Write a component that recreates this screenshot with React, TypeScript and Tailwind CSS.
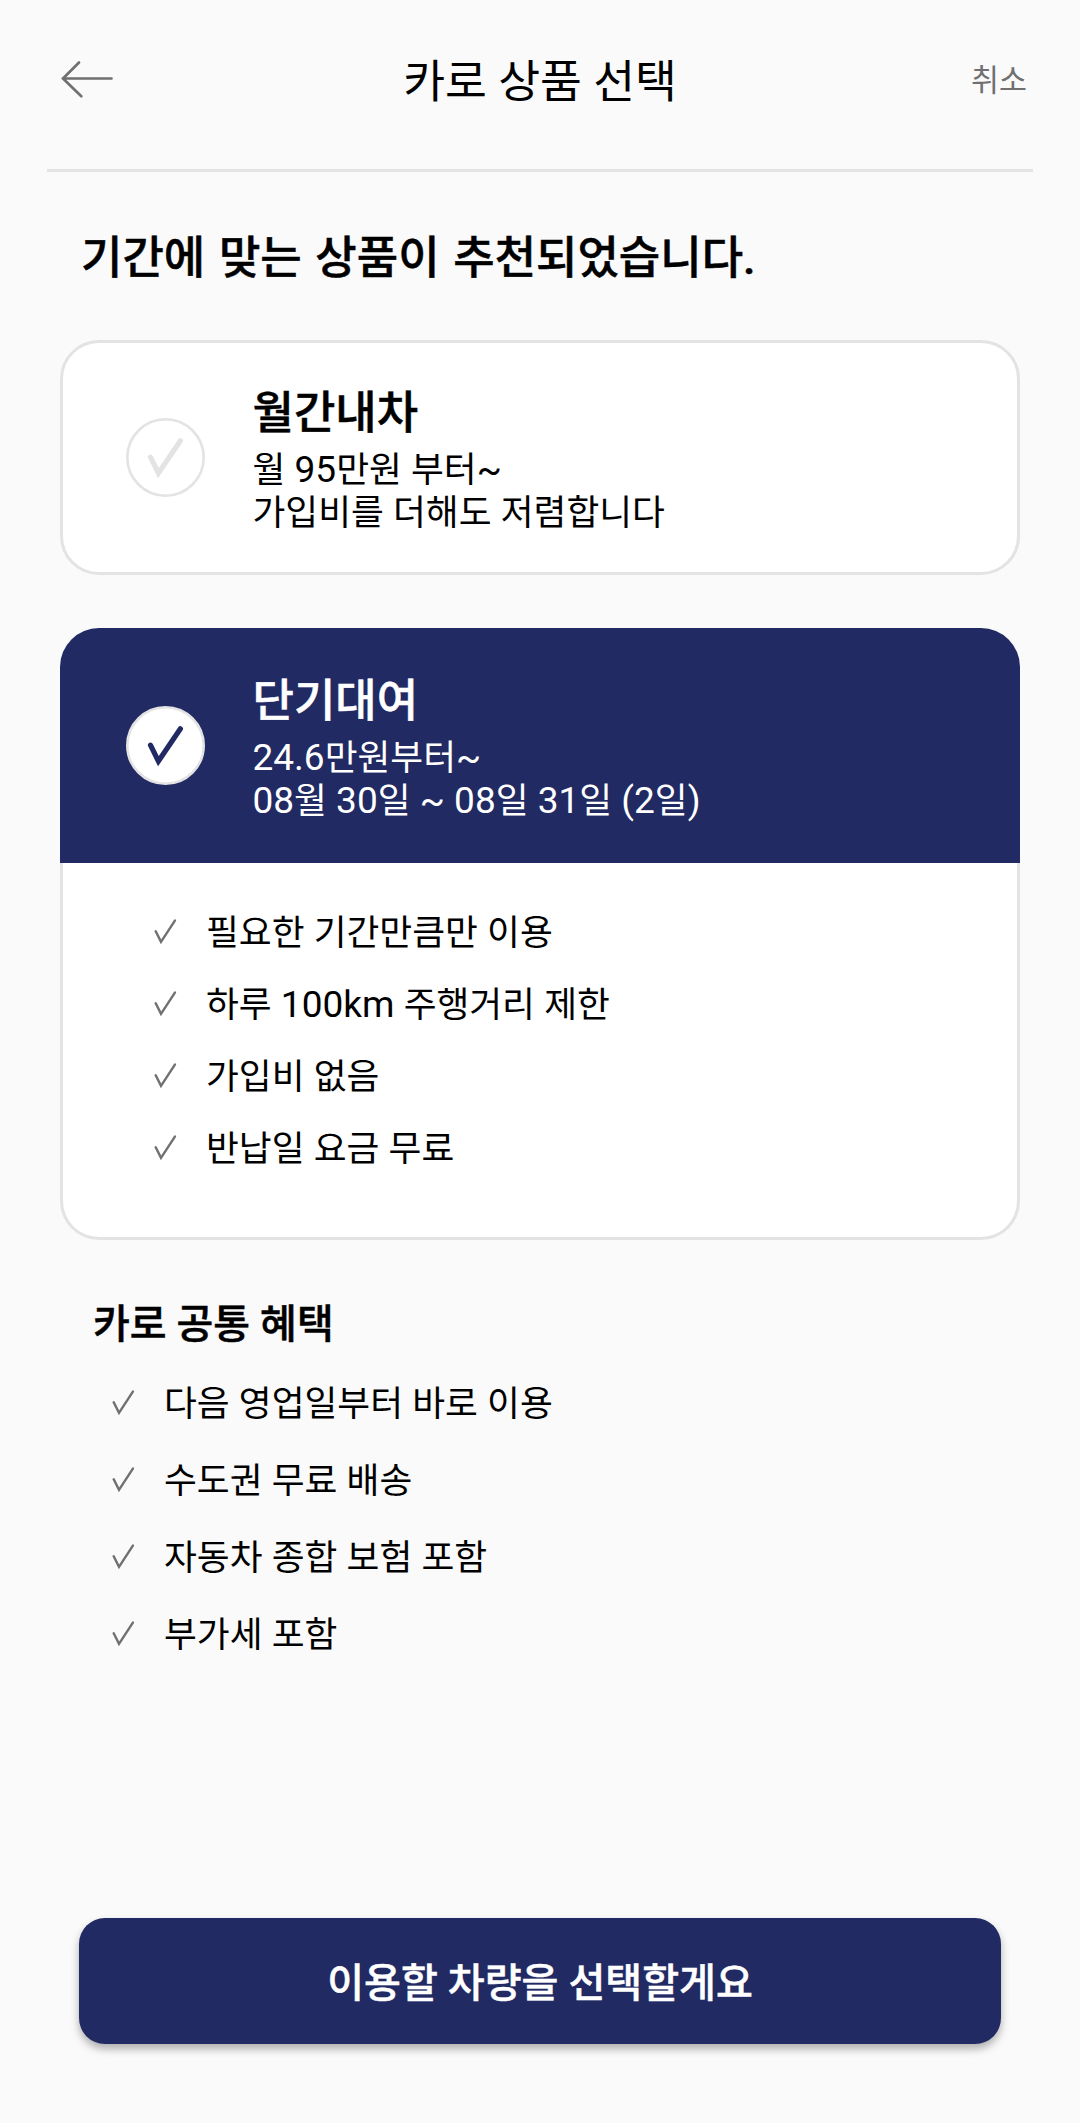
import { useState } from "react";
import clsx from "clsx";

interface CheckProps {
  className?: string;
}

interface Product {
  id: string;
  name: string;
  price: string;
  description: string;
  features: string[];
}

const products: Product[] = [
  {
    id: "monthly",
    name: "월간내차",
    price: "월 95만원 부터~",
    description: "가입비를 더해도 저렴합니다",
    features: [],
  },
  {
    id: "short",
    name: "단기대여",
    price: "24.6만원부터~",
    description: "08월 30일 ~ 08일 31일 (2일)",
    features: ["필요한 기간만큼만 이용", "하루 100km 주행거리 제한", "가입비 없음", "반납일 요금 무료"],
  },
];

const benefits = ["다음 영업일부터 바로 이용", "수도권 무료 배송", "자동차 종합 보험 포함", "부가세 포함"];

const BackArrow = () => (
  <svg width="54" height="40" viewBox="0 0 54 40" fill="none" stroke="#707070" strokeWidth="2.7" strokeLinecap="round">
    <path d="M51.5 19.5H4M19 3.5L3 19.5L21.3 37.3" />
  </svg>
);

const SmallCheck = () => (
  <svg width="24" height="28" viewBox="0 0 24 28" fill="none" stroke="#707070" strokeWidth="2.4" strokeLinecap="round">
    <path d="M1.7 12.3L7 22.8L20.9 1.6" />
  </svg>
);

const CircleCheck = ({ className }: CheckProps) => (
  <svg width="79" height="79" viewBox="0 0 79 79" fill="none" className={className}>
    <circle cx="39.5" cy="39.5" r="38.2" fill="#fff" stroke="#e3e3e3" strokeWidth="2.6" />
    <path d="M24.5 39.2L32.4 55.2L54.4 22.8" stroke="currentColor" strokeWidth="5.2" strokeLinecap="round" />
  </svg>
);

// 숫자와 영문은 한글보다 조금 크게 표시
const BodyText = ({ text }: { text: string }) => (
  <span className="text-[35.7px]">
    {text.split(/([0-9A-Za-z.~() ]+)/).map((part, index) =>
      index % 2 === 1 ? (
        <span key={index} className="text-[37px] whitespace-pre">
          {part}
        </span>
      ) : (
        part
      ),
    )}
  </span>
);

export default function App() {
  const [selected, setSelected] = useState("short");

  return (
    <div className="flex h-[2123px] w-[1080px] flex-col bg-[#fafafa] font-[Roboto,'Noto_Sans_CJK_KR',sans-serif] text-black">
      <header className="mx-[47px] grid h-[172px] grid-cols-[120px_1fr_120px] border-b-3 border-[#e3e3e3] pt-[59px]">
        <button className="ml-[13px] h-10 w-[54px]">
          <BackArrow />
        </button>
        <h1 className="text-center text-[45.5px] leading-[48px]">카로 상품 선택</h1>
        <button className="mr-1.5 h-11 text-right text-[30.4px] leading-[44px] text-[#707070]">취소</button>
      </header>
      <main className="px-[60px]">
        <h2 className="mt-[57px] ml-[21px] text-[45px] leading-[60px] font-medium [word-spacing:2.5px] [-webkit-text-stroke:0.5px]">
          기간에 맞는 상품이 추천되었습니다.
        </h2>
        <ul className="mt-[51px] flex flex-col gap-[53px]">
          {products.map(product => {
            const isSelected = product.id === selected;
            return (
              <li
                key={product.id}
                className={clsx("rounded-[39px]", !isSelected && "border-3 border-[#e3e3e3] bg-white")}
              >
                <button
                  onClick={() => setSelected(product.id)}
                  className={clsx(
                    "flex w-full text-left",
                    isSelected
                      ? "h-[235px] rounded-t-[39px] bg-[#212a62] pt-[44px] pl-[66px] text-white"
                      : "h-[229px] pt-[41px] pl-[63px]",
                  )}
                >
                  <CircleCheck className={clsx("mt-[34px]", isSelected ? "text-[#212a62]" : "text-[#e3e3e3]")} />
                  <div className="ml-[47.5px]">
                    <h3 className="mt-px text-[45px] leading-[58px] font-medium [-webkit-text-stroke:0.5px]">
                      {product.name}
                    </h3>
                    <p className="mt-[5px] h-[43px] leading-[43px]">
                      <BodyText text={product.price} />
                    </p>
                    <p className="h-[43px] leading-[43px]">
                      <BodyText text={product.description} />
                    </p>
                  </div>
                </button>
                {isSelected && (
                  <ul className="h-[377px] rounded-b-[39px] border-3 border-t-0 border-[#e3e3e3] bg-white pt-[34px] pl-[91px]">
                    {product.features.map(feature => (
                      <li key={feature} className="flex h-[72px] items-center gap-[28px]">
                        <SmallCheck />
                        <BodyText text={feature} />
                      </li>
                    ))}
                  </ul>
                )}
              </li>
            );
          })}
        </ul>
        <section className="mt-[59px] ml-[33px]">
          <h2 className="text-[40px] leading-[52px] font-medium [-webkit-text-stroke:0.5px]">카로 공통 혜택</h2>
          <ul className="mt-[14px] ml-[19px]">
            {benefits.map(benefit => (
              <li key={benefit} className="flex h-[77px] items-center gap-[28px]">
                <SmallCheck />
                <BodyText text={benefit} />
              </li>
            ))}
          </ul>
        </section>
      </main>
      <button className="mx-[79px] mt-auto mb-[79px] h-[126px] shrink-0 rounded-[26px] bg-[#212a62] pt-1.5 text-[40.1px] font-medium text-white shadow-[0_5px_8px_rgba(0,0,0,0.3)] [-webkit-text-stroke:0.5px]">
        이용할 차량을 선택할게요
      </button>
    </div>
  );
}
